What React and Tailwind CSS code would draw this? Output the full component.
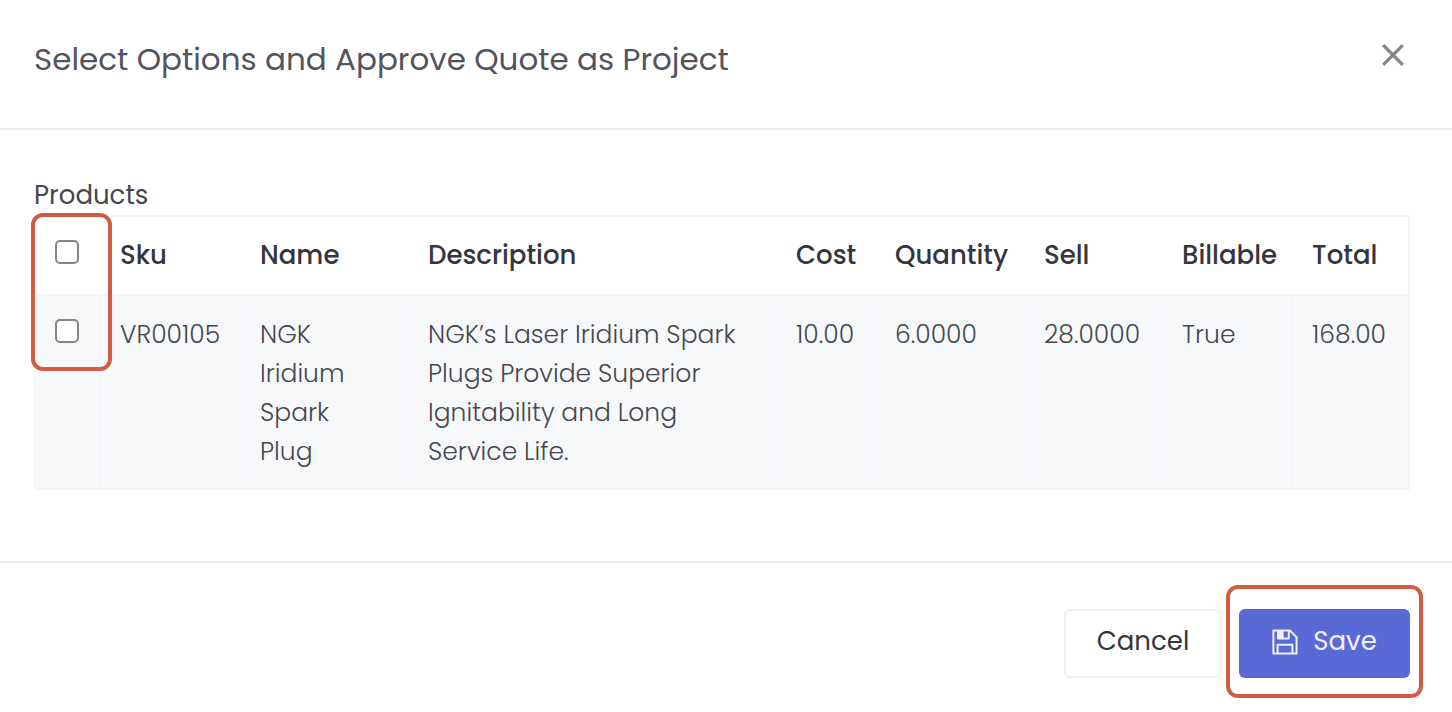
import { useState } from "react";

const columns = [
  { key: "sku", label: "Sku", width: "w-[140px]" },
  { key: "name", label: "Name", width: "w-[168px]" },
  { key: "description", label: "Description", width: "" },
  { key: "cost", label: "Cost", width: "w-[99px]" },
  { key: "quantity", label: "Quantity", width: "w-[149px]" },
  { key: "sell", label: "Sell", width: "w-[138px]" },
  { key: "billable", label: "Billable", width: "w-[130px]" },
  { key: "total", label: "Total", width: "w-[117px]" },
];

const products = [
  {
    sku: "VR00105",
    name: "NGK Iridium Spark Plug",
    description:
      "NGK’s Laser Iridium Spark Plugs Provide Superior Ignitability and Long Service Life.",
    cost: "10.00",
    quantity: "6.0000",
    sell: "28.0000",
    billable: "True",
    total: "168.00",
  },
];

function Checkbox({ label, checked, onChange }) {
  return (
    <input
      type="checkbox"
      aria-label={label}
      checked={checked}
      onChange={onChange}
      className="block size-6 appearance-none rounded-[5px] border-2 border-[#858585] bg-white checked:border-[#5b69d6] checked:bg-[#5b69d6]"
    />
  );
}

function CloseIcon() {
  return (
    <svg viewBox="0 0 22 22" className="size-[22px]" fill="none" stroke="#858585" strokeWidth="3.2" aria-hidden="true">
      <path d="M1.2 1.2l19.6 19.6M20.8 1.2L1.2 20.8" />
    </svg>
  );
}

function SaveIcon() {
  return (
    <svg viewBox="0 0 26 26" className="size-[26px]" fill="none" stroke="#eef0fd" strokeWidth="2" strokeLinejoin="round" aria-hidden="true">
      <path d="M1.4 1.4h16.4l6.8 6.8v16.4H1.4z" />
      <path d="M5.6 24.4v-8.6h14.8v8.6" />
      <path d="M6 1.4v8.2h10.8V1.4" />
      <path d="M6 1.4h5.6v8.2H6z" fill="#eef0fd" stroke="none" />
    </svg>
  );
}

export default function App() {
  const [selected, setSelected] = useState([]);
  const allSelected = selected.length === products.length;

  const toggle = (sku) =>
    setSelected((current) =>
      current.includes(sku) ? current.filter((s) => s !== sku) : [...current, sku]
    );

  return (
    <main
      role="dialog"
      aria-labelledby="dialog-title"
      className="bg-white font-['Poppins','Inter',sans-serif] text-[25px] leading-[39px] text-[#46474d]"
    >
      <header className="flex items-start justify-between border-b-2 border-[#ebedf2] px-[34px] pt-10 pb-[49px]">
        <h1 id="dialog-title" className="text-[31px] leading-[39px] font-normal text-[#53545c]">
          Select Options and Approve Quote as Project
        </h1>
        <button type="button" aria-label="Close" className="mt-1 mr-[14px]">
          <CloseIcon />
        </button>
      </header>

      <section className="px-[34px] pt-[46px] pb-[71px]">
        <h2 className="text-[26px] leading-[39px] font-normal">Products</h2>
        <div className="relative mr-2">
          <table className="w-full table-fixed border-collapse border-2 border-[#f5f6fa] text-left">
            <thead>
              <tr className="text-[26px] leading-[39px] text-[#35363d]">
                <th className="w-[65px] pt-[19px] pb-5 pl-[19px] align-top">
                  <div className="pt-1 pb-[10px]">
                    <Checkbox
                      label="Select all products"
                      checked={allSelected}
                      onChange={() => setSelected(allSelected ? [] : products.map((p) => p.sku))}
                    />
                  </div>
                </th>
                {columns.map((column) => (
                  <th key={column.key} scope="col" className={`${column.width} pt-[19px] pl-5 align-top font-medium`}>
                    {column.label}
                  </th>
                ))}
              </tr>
            </thead>
            <tbody>
              {products.map((product) => (
                <tr key={product.sku} className="bg-[#f7f8fa] font-light">
                  <td className="border-2 border-[#f5f6fa] pt-[19px] pl-[19px] align-top">
                    <div className="pt-1">
                      <Checkbox
                        label={`Select ${product.name}`}
                        checked={selected.includes(product.sku)}
                        onChange={() => toggle(product.sku)}
                      />
                    </div>
                  </td>
                  {columns.map((column) => (
                    <td key={column.key} className="border-2 border-[#f5f6fa] pt-[19px] pr-5 pb-[17px] pl-[19px] align-top">
                      {product[column.key]}
                    </td>
                  ))}
                </tr>
              ))}
            </tbody>
          </table>
          <div
            aria-hidden="true"
            className="pointer-events-none absolute -top-[2px] -left-[3px] h-[158px] w-[81px] rounded-xl border-4 border-[#d15b44]"
          />
        </div>
      </section>

      <footer className="flex justify-end gap-[17px] border-t-2 border-[#ebedf2] pt-[46px] pr-[42px] pb-[34px] pl-[34px]">
        <button
          type="button"
          className="h-[69px] w-[158px] rounded-md border-2 border-[#f0f1f7] pb-1 text-[26px] text-[#35363a]"
        >
          Cancel
        </button>
        <div className="relative">
          <button
            type="button"
            className="flex h-[69px] w-[171px] items-center justify-center gap-[15px] rounded-md bg-[#5b69d6] pb-1 text-[26px] text-[#eef0fd]"
          >
            <SaveIcon />
            Save
          </button>
          <div
            aria-hidden="true"
            className="pointer-events-none absolute -inset-x-[13px] -top-6 -bottom-5 rounded-xl border-4 border-[#d15b44]"
          />
        </div>
      </footer>
    </main>
  );
}
